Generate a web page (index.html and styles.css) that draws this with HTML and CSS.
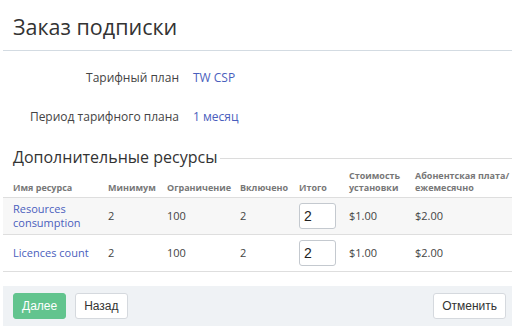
FILE: index.html
```html
<!DOCTYPE html>
<html lang="ru">

<head>
    <meta charset="UTF-8">
    <title>Заказ подписки</title>
    <link rel="stylesheet" href="styles.css">
</head>

<body>
    <div class="page">
        <h1 class="title">Заказ подписки</h1>

        <div class="info">
            <div class="infoRow">
                <span class="infoLabel">Тарифный план</span>
                <a class="link" href="#">TW CSP</a>
            </div>
            <div class="infoRow">
                <span class="infoLabel">Период тарифного плана</span>
                <a class="link" href="#">1 месяц</a>
            </div>
        </div>

        <div class="section">
            <h2>Дополнительные ресурсы</h2>
            <div class="sectionLine"></div>
        </div>

        <table class="resources">
            <colgroup>
                <col class="cName">
                <col class="cMin">
                <col class="cLim">
                <col class="cInc">
                <col class="cTot">
                <col class="cSet">
                <col class="cFee">
            </colgroup>
            <thead>
                <tr>
                    <th>Имя ресурса</th>
                    <th>Минимум</th>
                    <th>Ограничение</th>
                    <th>Включено</th>
                    <th>Итого</th>
                    <th>Стоимость<br>установки</th>
                    <th>Абонентская плата/<br>ежемесячно</th>
                </tr>
            </thead>
            <tbody>
                <tr class="odd">
                    <td><a class="link" href="#">Resources<br>consumption</a></td>
                    <td>2</td>
                    <td>100</td>
                    <td>2</td>
                    <td><input class="qty" type="text" value="2"></td>
                    <td>$1.00</td>
                    <td>$2.00</td>
                </tr>
                <tr>
                    <td><a class="link" href="#">Licences count</a></td>
                    <td>2</td>
                    <td>100</td>
                    <td>2</td>
                    <td><input class="qty" type="text" value="2"></td>
                    <td>$1.00</td>
                    <td>$2.00</td>
                </tr>
            </tbody>
        </table>

        <div class="footer">
            <button class="btn btnPrimary">Далее</button>
            <button class="btn">Назад</button>
            <button class="btn btnRight">Отменить</button>
        </div>
    </div>
</body>

</html>
```

FILE: styles.css
```css
* {
    box-sizing: border-box;
    margin: 0;
    padding: 0;
}

body {
    font-family: "Open Sans", "DejaVu Sans", sans-serif;
    color: #444;
    background-color: #fff;
}

.page {
    margin-left: 3px;
}

.title {
    font-size: 21.5px;
    font-weight: normal;
    color: #333;
    line-height: 30px;
    padding: 12px 10px 0;
    height: 51px;
    border-bottom: 1px solid #d3dbe2;
}

.info {
    padding-top: 15px;
}

.infoRow {
    display: flex;
    align-items: center;
    height: 22px;
    margin-bottom: 17px;
    font-size: 12px;
}

.infoLabel {
    width: 190px;
    text-align: right;
    padding-right: 14px;
    color: #444;
}

.link {
    color: #4a5ebd;
    text-decoration: none;
}

.section {
    display: flex;
    align-items: center;
    padding-left: 10px;
    height: 26px;
}

.section h2 {
    font-size: 16px;
    font-weight: normal;
    color: #333;
    padding-right: 3px;
}

.sectionLine {
    flex: 1;
    height: 1px;
    background-color: #dcdcdc;
    margin-top: 2px;
}

.resources {
    width: 100%;
    table-layout: fixed;
    border-collapse: collapse;
    font-size: 11px;
}

.resources th {
    font-size: 9px;
    font-weight: bold;
    color: #777;
    text-align: left;
    vertical-align: bottom;
    white-space: nowrap;
    padding: 0 0 3px 10px;
    line-height: 12px;
    height: 27px;
    border-bottom: 1px solid #dedede;
}

.resources td {
    padding: 0 0 0 10px;
    height: 37px;
    line-height: 14px;
    border-bottom: 1px solid #dedede;
    color: #444;
}

.resources tr.odd td {
    background-color: #f7f7f7;
}

.cName { width: 95px; }
.cMin { width: 59px; }
.cLim { width: 73px; }
.cInc { width: 59px; }
.cTot { width: 50px; }
.cSet { width: 66px; }
.cFee { width: 107px; }

.qty {
    display: block;
    width: 37px;
    height: 26px;
    border: 1px solid #c4c9cf;
    border-radius: 3px;
    padding-left: 4px;
    font-family: "Liberation Sans", sans-serif;
    font-size: 14px;
    color: #222;
    background-color: #fff;
}

.footer {
    display: flex;
    align-items: center;
    gap: 9px;
    margin-top: 14px;
    height: 40px;
    padding: 0 6px 0 10px;
    background-color: #eff2f5;
}

.btn {
    height: 26px;
    padding: 0 8px;
    border: 1px solid #d5d9de;
    border-radius: 3px;
    background-color: #fff;
    font-family: "Liberation Sans", sans-serif;
    font-size: 12px;
    color: #333;
}

.btnPrimary {
    background-color: #62c48e;
    border-color: #62c48e;
    color: #fff;
}

.btnRight {
    margin-left: auto;
}
```
